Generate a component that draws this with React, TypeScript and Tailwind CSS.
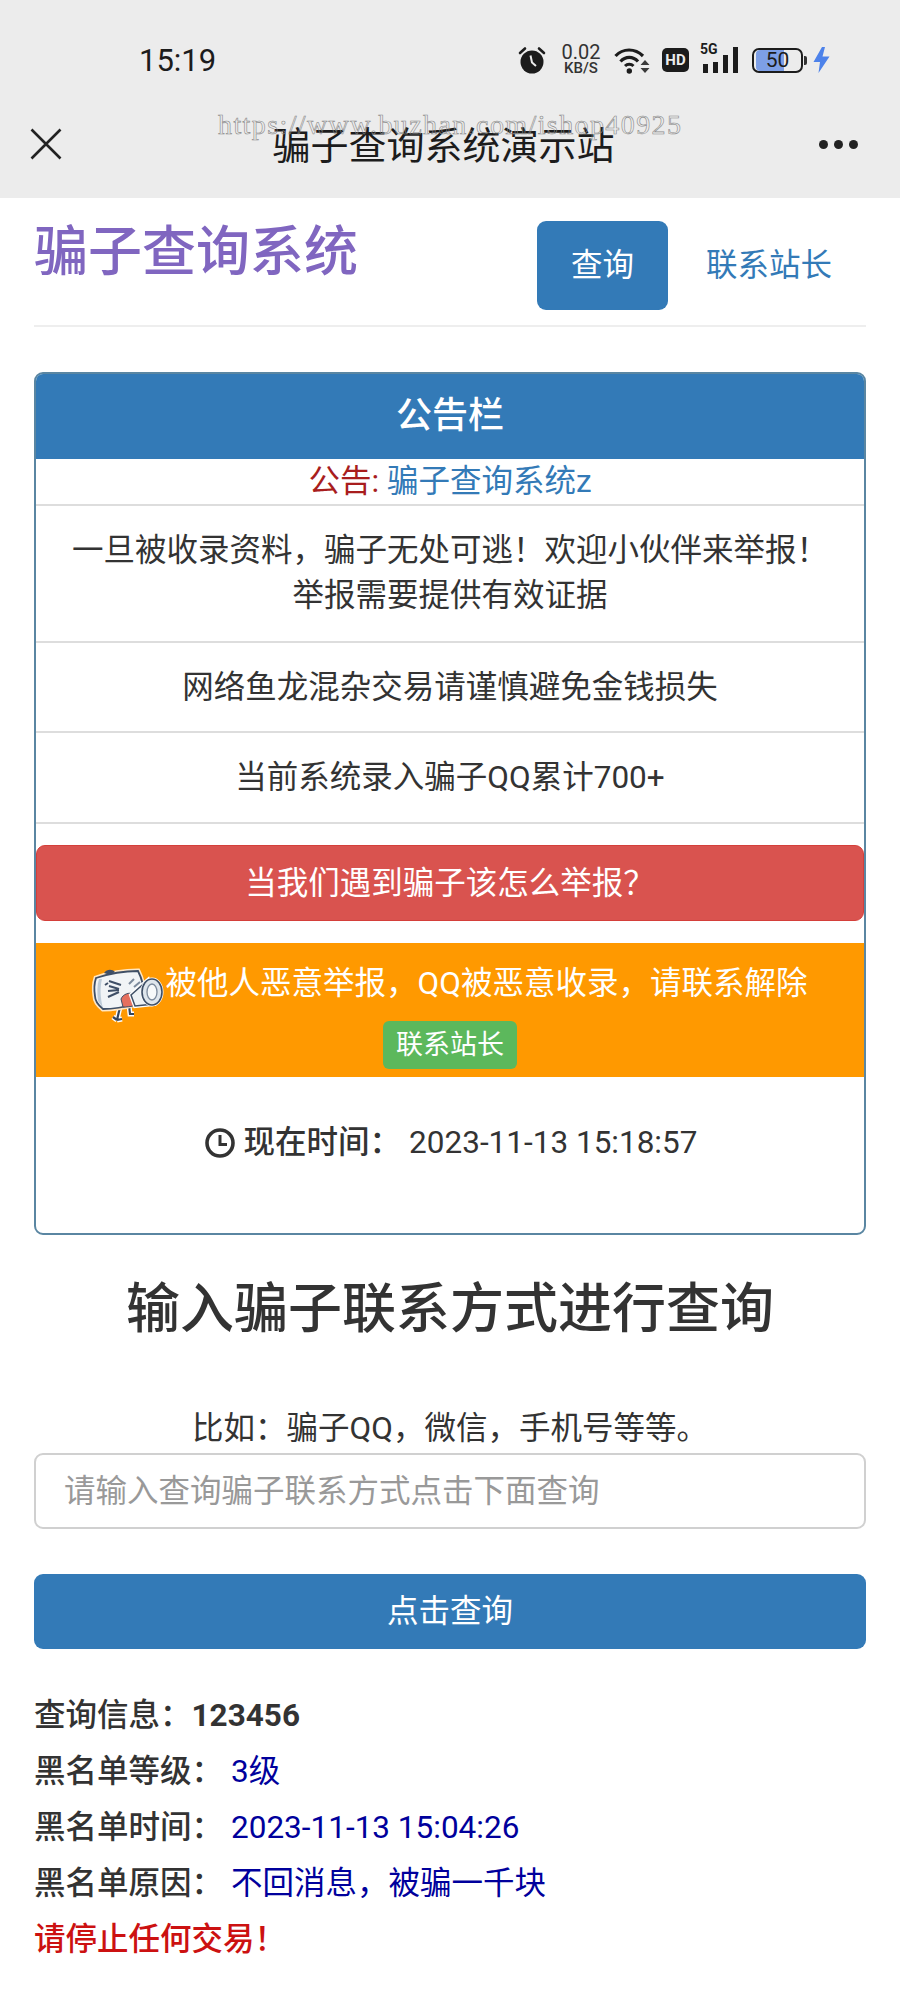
function AlarmIcon() {
  return (
    <svg width="28" height="28" viewBox="0 0 28 28">
      <circle cx="14" cy="16" r="11.5" fill="#1c1c1c" />
      <path d="M2 7 L7 2.5 M26 7 L21 2.5" stroke="#1c1c1c" strokeWidth="2.6" strokeLinecap="round" />
      <path d="M12.5 9.5 L14 16.5 L18 20" stroke="#ececec" strokeWidth="2" fill="none" />
    </svg>
  );
}

function WifiIcon() {
  return (
    <svg width="37" height="30" viewBox="0 0 37 30">
      <path d="M1.5 11 C9 3 21 3 29 11" stroke="#1c1c1c" strokeWidth="3.2" fill="none" />
      <path d="M6.5 16.5 C11.5 11 19 11 24 16.5" stroke="#1c1c1c" strokeWidth="3.2" fill="none" />
      <path d="M11 21 C13.5 18.5 17 18.5 19.5 21" stroke="#1c1c1c" strokeWidth="3" fill="none" />
      <circle cx="15.3" cy="26" r="2.7" fill="#1c1c1c" />
      <path d="M31 15 L35.5 20 H26.5 Z M26.5 23 H35.5 L31 28 Z" fill="#3a3a3a" />
    </svg>
  );
}

function SignalIcon() {
  return (
    <svg width="42" height="26" viewBox="0 0 42 26">
      <rect x="3" y="17" width="5" height="9" fill="#1c1c1c" />
      <rect x="13" y="15" width="5" height="11" fill="#1c1c1c" />
      <rect x="23" y="8" width="5" height="18" fill="#1c1c1c" />
      <rect x="33" y="0" width="5" height="26" fill="#1c1c1c" />
    </svg>
  );
}

function BoltIcon() {
  return (
    <svg width="17" height="26" viewBox="0 0 17 26">
      <path d="M9 0 L0.5 15 H7 L5.5 26 L16.5 9.5 H9.5 L12 0 Z" fill="#4d82ea" />
    </svg>
  );
}

function CloseIcon() {
  return (
    <svg width="32" height="32" viewBox="0 0 32 32">
      <path d="M1.5 1.5 L30.5 30.5 M30.5 1.5 L1.5 30.5" stroke="#222" strokeWidth="2.6" />
    </svg>
  );
}

function ClockIcon() {
  return (
    <svg width="30" height="30" viewBox="0 0 30 30">
      <circle cx="15" cy="15" r="13" stroke="#333" strokeWidth="3.6" fill="none" />
      <path d="M15 7 V16.5 H22" stroke="#333" strokeWidth="3" fill="none" />
    </svg>
  );
}

// shouting box mascot with megaphone
function Mascot() {
  const body = "M8 17 C20 13 36 10 50 10 C53 16 56 24 55 31 L48 43 C37 46 26 48 15 48 C10 44 7 40 7 35 C6 29 6 23 8 17 Z";
  const cone = "M43 34 L60 19 L66 43 L47 45 Z";
  return (
    <svg width="80" height="68" viewBox="0 0 80 68" className="mt-[22px] shrink-0">
      <path d="M32 46 L29 59 M29 59 L25 56 M29 59 L34 58 M41 44 L42 53 L46 53" stroke="#fff" strokeWidth="5" fill="none" />
      <path d="M32 46 L29 59 M29 59 L25 56 M29 59 L34 58 M41 44 L42 53 L46 53" stroke="#33465f" strokeWidth="2.2" fill="none" />
      <path d={body} fill="#f1f4f6" stroke="#ffe7c4" strokeWidth="5" />
      <path d={body} fill="#f1f4f6" stroke="#3f4f66" strokeWidth="1.8" />
      <path d="M10 40 C9 32 9 24 11 18 L14 18 C12 26 12 36 15 47 Z" fill="#bfccd8" />
      <path d="M16 12 C19 8 24 8 27 11 L22 14 Z" fill="#3f4f66" />
      <path d="M21 20 L33 24 M20 22 L17 24" stroke="#3f4f66" strokeWidth="2" fill="none" />
      <path d="M20 30 L31 29 M20 36 L31 31 M21 25 L31 28" stroke="#3f4f66" strokeWidth="2" fill="none" />
      <path d="M46 18 L41 23 M52 21 L46 26" stroke="#7c8a9c" strokeWidth="2" fill="none" />
      <path d="M33 38 C35 33 41 31 46 33 L48 44 C43 46 38 46 35 46 Z" fill="#e5705f" stroke="#3f4f66" strokeWidth="1" />
      <path d={cone} fill="#eef2f5" stroke="#fff" strokeWidth="4" />
      <path d={cone} fill="#eef2f5" stroke="#3f4f66" strokeWidth="1.5" />
      <ellipse cx="64" cy="31" rx="10" ry="13" fill="#dfe6ec" stroke="#fff" strokeWidth="3" />
      <ellipse cx="64" cy="31" rx="10" ry="13" fill="#dfe6ec" stroke="#3f4f66" strokeWidth="1.6" />
      <ellipse cx="64" cy="31" rx="5" ry="8" fill="#f7f9fa" stroke="#7c8a9c" strokeWidth="1.3" />
    </svg>
  );
}

export default function App() {
  return (
    <div className="w-[900px] h-[2000px] bg-white text-[#333] text-[31.5px] leading-[45px] font-['Roboto','Noto_Sans_CJK_SC',sans-serif]">
      {/* Phone chrome */}
      <div className="relative h-[198px] bg-[#ececec] text-[#1c1c1c]">
        <div className="flex items-center h-[120px] pl-[139px]">
          <span className="w-[78px] text-[31px]">15:19</span>
          <div className="ml-[301px]">
            <AlarmIcon />
          </div>
          <div className="flex flex-col items-center w-[42px] ml-[14px] text-[#333]">
            <span className="text-[20px] leading-[14px]">0.02</span>
            <span className="mt-[2px] text-[15px] leading-[14px] font-medium">KB/S</span>
          </div>
          <div className="ml-[12px]">
            <WifiIcon />
          </div>
          <span className="flex items-center justify-center w-[27px] h-[24px] ml-[11px] rounded-[5px] bg-[#1c1c1c] text-[#ececec] text-[15px] leading-none font-bold">HD</span>
          <div className="relative ml-[11px] w-[42px] h-[26px]">
            <SignalIcon />
            <span className="absolute left-0 top-[-5px] text-[14px] leading-[14px] font-bold">5G</span>
          </div>
          <div className="relative ml-[10px] w-[51px] h-[25px] rounded-[7px] border-2 border-[#1c1c1c] overflow-hidden">
            <div className="h-full w-[28px] ml-[2px] bg-[#7d9fe6] rounded-l-[4px]" />
            <span className="absolute inset-0 flex items-center justify-center text-[21px] leading-none">50</span>
          </div>
          <div className="w-[3px] h-[9px] ml-[1px] bg-[#333] rounded-r-[2px]" />
          <div className="ml-[6px]">
            <BoltIcon />
          </div>
        </div>
        <div className="relative flex items-center justify-between h-[48px] pl-[30px] pr-[42px]">
          <CloseIcon />
          <span className="ml-[6px] text-[38px] leading-[48px] translate-y-[2px]">骗子查询系统演示站</span>
          <div className="flex gap-[6px]">
            <div className="w-[9px] h-[9px] rounded-full bg-[#222]" />
            <div className="w-[9px] h-[9px] rounded-full bg-[#222]" />
            <div className="w-[9px] h-[9px] rounded-full bg-[#222]" />
          </div>
        </div>
        {/* Watermark over the title */}
        <span className="absolute left-[218px] top-[110px] text-[28px] leading-[30px] tracking-[1.4px] font-['Liberation_Serif',serif] text-transparent [-webkit-text-stroke:0.6px_#8a8a8a]">https://www.buzhan.com/ishop40925</span>
      </div>

      <div className="px-[34px]">
        {/* Header */}
        <div className="flex justify-between h-[129px] border-b-2 border-[#eee]">
          <h1 className="mt-[25px] text-[54px] leading-[60px] font-medium text-[#8066c0]">骗子查询系统</h1>
          <div className="flex mt-[23px] h-[89px] mr-[34px]">
            <a className="flex items-center justify-center w-[131px] rounded-[9px] bg-[#337ab7] text-white">查询</a>
            <a className="flex items-center ml-[38px] text-[#337ab7]">联系站长</a>
          </div>
        </div>

        {/* Notice panel */}
        <div className="flex flex-col h-[863px] mt-[45px] rounded-[9px] border-2 border-[#5a86a2] overflow-hidden text-center">
          <div className="flex items-center justify-center h-[85px] bg-[#337ab7] text-white text-[36px] font-medium">公告栏</div>
          <div className="h-[47px] border-b-2 border-[#ddd] leading-[45px]">
            <span className="text-[#a81d1d]">公告:</span> <span className="text-[#337ab7]">骗子查询系统z</span>
          </div>
          <div className="h-[137px] pt-[22px] px-[10px] border-b-2 border-[#ddd]">
            一旦被收录资料，骗子无处可逃！欢迎小伙伴来举报！<br />举报需要提供有效证据
          </div>
          <div className="h-[90px] pt-[22px] border-b-2 border-[#ddd]">网络鱼龙混杂交易请谨慎避免金钱损失</div>
          <div className="h-[91px] pt-[22px] border-b-2 border-[#ddd]">当前系统录入骗子QQ累计700+</div>
          <div className="flex items-center justify-center h-[76px] mt-[21px] rounded-[9px] border border-[#d43f3a] bg-[#d9534f] text-white">当我们遇到骗子该怎么举报？</div>
          <div className="h-[134px] mt-[22px] pt-[18px] bg-[#ff9900] text-white">
            <div className="flex items-center justify-center h-[45px] pr-[5px]">
              <Mascot />
              <span className="ml-[-2px]">被他人恶意举报，QQ被恶意收录，请联系解除</span>
            </div>
            <a className="inline-block w-[134px] h-[48px] mt-[15px] rounded-[6px] bg-[#5cb85c] text-[27px] leading-[48px]">联系站长</a>
          </div>
          <div className="flex items-center justify-center h-[45px] mt-[43px] pl-[2px]">
            <ClockIcon />
            <strong className="ml-[9px] font-medium">现在时间：</strong>
            <span className="ml-[8px]">2023-11-13 15:18:57</span>
          </div>
        </div>

        {/* Query form */}
        <h2 className="mt-[50px] text-center text-[54px] leading-[50px] font-medium">输入骗子联系方式进行查询</h2>
        <p className="mt-[72px] text-center leading-[43px]">比如：骗子QQ，微信，手机号等等。</p>
        <input
          placeholder="请输入查询骗子联系方式点击下面查询"
          className="block w-full h-[76px] mt-[3px] px-[28px] rounded-[9px] border-2 border-[#d0d0d0] bg-white placeholder:text-[#999]"
        />
        <button className="block w-full h-[75px] mt-[45px] rounded-[9px] bg-[#337ab7] text-white">点击查询</button>

        {/* Query result */}
        <div className="mt-[39px] leading-[56px] font-medium">
          <div>查询信息：<b>123456</b></div>
          <div className="flex"><span className="w-[197px]">黑名单等级：</span><span className="font-normal text-[#00009c]">3级</span></div>
          <div className="flex"><span className="w-[197px]">黑名单时间：</span><span className="font-normal text-[#00009c]">2023-11-13 15:04:26</span></div>
          <div className="flex"><span className="w-[197px]">黑名单原因：</span><span className="font-normal text-[#00009c]">不回消息，被骗一千块</span></div>
          <div className="text-[#cc1111]">请停止任何交易！</div>
        </div>
      </div>
    </div>
  );
}
